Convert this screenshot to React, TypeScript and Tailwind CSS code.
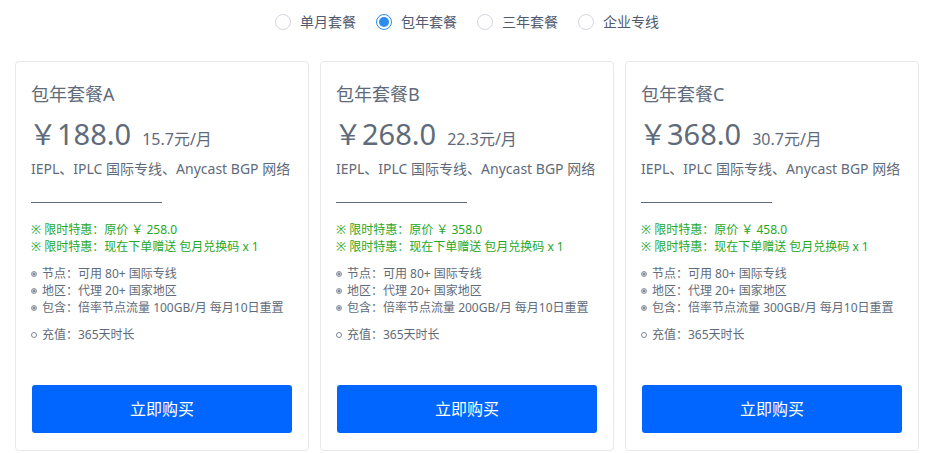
import React from "react";

const plans = [
  { name: "包年套餐A", price: "188.0", per: "15.7元/月", orig: "258.0", gb: "100GB" },
  { name: "包年套餐B", price: "268.0", per: "22.3元/月", orig: "358.0", gb: "200GB" },
  { name: "包年套餐C", price: "368.0", per: "30.7元/月", orig: "458.0", gb: "300GB" },
];

const options = ["单月套餐", "包年套餐", "三年套餐", "企业专线"];

function Radio({ label, checked }: { label: string; checked?: boolean }) {
  return (
    <label className="flex items-center gap-[9px] cursor-pointer">
      {checked ? (
        <span className="w-[16px] h-[16px] rounded-full border border-[#2d8cf0] flex items-center justify-center bg-white">
          <span className="w-[10px] h-[10px] rounded-full bg-[#2d8cf0]" />
        </span>
      ) : (
        <span className="w-[16px] h-[16px] rounded-full border border-[#d4d7de] bg-white" />
      )}
      <span className="text-[14px] text-[#515a6e]">{label}</span>
    </label>
  );
}

function Dot({ hollow }: { hollow?: boolean }) {
  return hollow ? (
    <span className="inline-block w-[6px] h-[6px] rounded-full border border-[#7d8796] mr-[5px]" />
  ) : (
    <span className="inline-flex items-center justify-center w-[6px] h-[6px] rounded-full border border-[#8f98a5] bg-[#c5cad2] mr-[5px]">
      <span className="w-[2px] h-[2px] rounded-full bg-[#6b7583]" />
    </span>
  );
}

export default function App() {
  return (
    <div
      className="w-[926px] h-[453px] bg-white overflow-hidden"
      style={{ fontFamily: '"Noto Sans", "Noto Sans CJK SC", sans-serif' }}
    >
      <div className="flex justify-center pt-[11px] pl-[8px] gap-[20px]">
        {options.map((o, i) => (
          <Radio key={o} label={o} checked={i === 1} />
        ))}
      </div>
      <div className="flex gap-[11px] pl-[15px] mt-[29px]">
        {plans.map((p) => (
          <div
            key={p.name}
            className="w-[294px] h-[390px] border border-[#e6e8eb] rounded-[4px] flex flex-col px-[15px] pt-[20px] pb-[17px] text-[#5f6b7a]"
          >
            <div className="text-[18px] leading-[25px]">{p.name}</div>
            <div className="flex items-baseline mt-[10px] leading-[34px]">
              <span className="text-[28px] -ml-[2px]">￥</span>
              <span className="text-[29px]">{p.price}</span>
              <span className="text-[16px] ml-[11px]">{p.per}</span>
            </div>
            <div className="text-[14px] leading-[20px] mt-[3px] whitespace-nowrap">
              IEPL、IPLC 国际专线、Anycast BGP 网络
            </div>
            <div className="w-[131px] h-px bg-[#5f6b7a] mt-[23px]" />
            <div className="mt-[18px] text-[12px] leading-[17px] text-[#27a727]">
              <div>※ 限时特惠：原价 ￥ {p.orig}</div>
              <div>※ 限时特惠：现在下单赠送 包月兑换码 x 1</div>
            </div>
            <div className="mt-[10px] text-[12px] leading-[17px] text-[#5f6b7a]">
              <div className="flex items-center"><Dot />节点：可用 80+ 国际专线</div>
              <div className="flex items-center"><Dot />地区：代理 20+ 国家地区</div>
              <div className="flex items-center"><Dot />包含：倍率节点流量 {p.gb}/月 每月10日重置</div>
              <div className="flex items-center mt-[10px]"><Dot hollow />充值：365天时长</div>
            </div>
            <button className="mt-auto mx-[1px] h-[48px] rounded-[3px] bg-[#0066ff] text-white text-[16px]">
              立即购买
            </button>
          </div>
        ))}
      </div>
    </div>
  );
}
